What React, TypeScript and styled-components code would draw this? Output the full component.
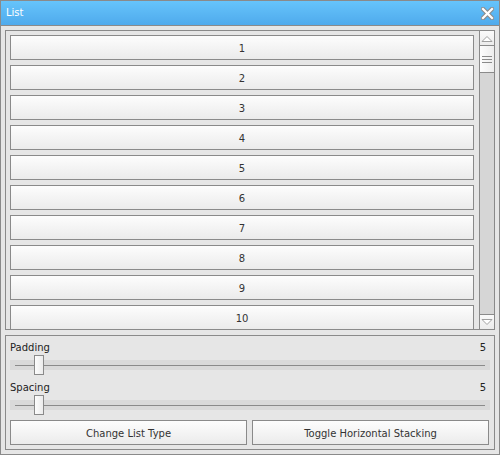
import styled, { createGlobalStyle } from 'styled-components';

const GlobalStyle = createGlobalStyle`
  html, body {
    margin: 0;
    padding: 0;
    background: #ffffff;
  }
  * {
    box-sizing: border-box;
  }
`;

const items = ['1', '2', '3', '4', '5', '6', '7', '8', '9', '10'];

const sliders = [
  { id: 'padding', label: 'Padding', value: 5 },
  { id: 'spacing', label: 'Spacing', value: 5 },
];

export default function App() {
  return (
    <>
      <GlobalStyle />
      <Window>
        <TitleBar>
          <Title>List</Title>
          <CloseButton aria-label="Close">
            <svg width="13" height="13" viewBox="0 0 13 13">
              <path d="M2 2 L11 11 M11 2 L2 11" stroke="#8c8c8c" strokeWidth="4.4" strokeLinecap="square" />
              <path d="M2 2 L11 11 M11 2 L2 11" stroke="#ffffff" strokeWidth="2.2" strokeLinecap="square" />
            </svg>
          </CloseButton>
        </TitleBar>
        <Body>
          <ListPanel>
            <ListContent>
              {items.map(item => (
                <ListItem key={item}>{item}</ListItem>
              ))}
            </ListContent>
            <ScrollBar>
              <ArrowButton $edge="top">
                <svg width="12" height="7" viewBox="0 0 12 7">
                  <path d="M1 6.5 L6 1.5 L11 6.5 Z" fill="#ffffff" stroke="#a0a0a0" strokeWidth="1" />
                </svg>
              </ArrowButton>
              <Thumb>
                <Grip />
                <Grip />
                <Grip />
              </Thumb>
              <Track />
              <ArrowButton $edge="bottom">
                <svg width="12" height="7" viewBox="0 0 12 7">
                  <path d="M1 0.5 L6 5.5 L11 0.5 Z" fill="#ffffff" stroke="#a0a0a0" strokeWidth="1" />
                </svg>
              </ArrowButton>
            </ScrollBar>
          </ListPanel>
          <SettingsPanel>
            {sliders.map(s => (
              <SliderGroup key={s.id}>
                <LabelRow>
                  <span>{s.label}</span>
                  <span>{s.value}</span>
                </LabelRow>
                <SliderRow>
                  <SliderBand>
                    <SliderLine />
                    <SliderThumb style={{ left: 24 }} />
                  </SliderBand>
                </SliderRow>
              </SliderGroup>
            ))}
            <ButtonRow>
              <PushButton>Change List Type</PushButton>
              <PushButton>Toggle Horizontal Stacking</PushButton>
            </ButtonRow>
          </SettingsPanel>
        </Body>
      </Window>
    </>
  );
}

const Window = styled.div`
  width: 500px;
  height: 455px;
  border: 1px solid #8a8a8a;
  background: #e6e6e6;
  display: flex;
  flex-direction: column;
  font-family: 'DejaVu Sans', 'Liberation Sans', sans-serif;
  font-size: 10px;
  color: #333333;
`;

const TitleBar = styled.div`
  height: 25px;
  flex: none;
  display: flex;
  align-items: center;
  justify-content: space-between;
  padding: 0 5px 1px 5px;
  background: linear-gradient(to bottom, #66c4fb, #4faaec);
  border-bottom: 1px solid #8a8a8a;
`;

const Title = styled.span`
  color: #ffffff;
  font-size: 10px;
`;

const CloseButton = styled.div`
  display: flex;
  margin-top: 1px;
`;

const Body = styled.div`
  flex: 1;
  display: flex;
  flex-direction: column;
  gap: 5px;
  padding: 4px;
`;

const ListPanel = styled.div`
  height: 300px;
  flex: none;
  display: flex;
  border: 1px solid #8a8a8a;
  background: #e6e6e6;
  overflow: hidden;
`;

const ListContent = styled.div`
  flex: 1;
  display: flex;
  flex-direction: column;
  gap: 5px;
  padding: 4px 5px 0 4px;
  overflow: hidden;
`;

const ListItem = styled.div`
  height: 25px;
  flex: none;
  display: flex;
  align-items: center;
  justify-content: center;
  border: 1px solid #8a8a8a;
  background: linear-gradient(to bottom, #fdfdfd, #ebebeb);
  color: #333333;
  padding-top: 1px;
`;

const ScrollBar = styled.div`
  width: 15px;
  flex: none;
  display: flex;
  flex-direction: column;
  border-left: 1px solid #8a8a8a;
  background: #d6d6d6;
`;

interface ArrowButtonProps {
  $edge: 'top' | 'bottom';
}

const ArrowButton = styled.div<ArrowButtonProps>`
  height: 15px;
  flex: none;
  display: flex;
  align-items: center;
  justify-content: center;
  background: linear-gradient(to bottom, #fafafa, #ececec);
  ${props => (props.$edge === 'top' ? 'border-bottom' : 'border-top')}: 1px solid #8a8a8a;
`;

const Thumb = styled.div`
  height: 27px;
  flex: none;
  display: flex;
  flex-direction: column;
  align-items: center;
  justify-content: center;
  gap: 2px;
  background: linear-gradient(to right, #fdfdfd, #ededed);
  border-bottom: 1px solid #8a8a8a;
`;

const Grip = styled.div`
  width: 10px;
  height: 1px;
  background: #8a8a8a;
`;

const Track = styled.div`
  flex: 1;
  background: #d6d6d6;
`;

const SettingsPanel = styled.div`
  flex: 1;
  display: flex;
  flex-direction: column;
  border: 1px solid #8a8a8a;
  padding: 4px;
  gap: 5px;
`;

const SliderGroup = styled.div`
  display: flex;
  flex-direction: column;
`;

const LabelRow = styled.div`
  height: 15px;
  display: flex;
  align-items: center;
  justify-content: space-between;
  padding: 0 4px 0 0;
  color: #222222;
  line-height: 15px;
`;

const SliderRow = styled.div`
  height: 20px;
  display: flex;
  align-items: center;
`;

const SliderBand = styled.div`
  position: relative;
  flex: 1;
  height: 10px;
  background: #d9d9d9;
`;

const SliderLine = styled.div`
  position: absolute;
  left: 5px;
  right: 5px;
  top: 5px;
  height: 1px;
  background: #8a8a8a;
`;

const SliderThumb = styled.div`
  position: absolute;
  top: -5px;
  width: 10px;
  height: 20px;
  border: 1px solid #8a8a8a;
  background: linear-gradient(to right, #fdfdfd, #ececec);
`;

const ButtonRow = styled.div`
  display: grid;
  grid-template-columns: 1fr 1fr;
  gap: 5px;
  padding-right: 1px;
`;

const PushButton = styled.button`
  height: 25px;
  border: 1px solid #8a8a8a;
  border-radius: 0;
  background: linear-gradient(to bottom, #fdfdfd, #ebebeb);
  font-family: 'DejaVu Sans', 'Liberation Sans', sans-serif;
  font-size: 10px;
  color: #333333;
  padding: 1px 0 0 0;
`;
